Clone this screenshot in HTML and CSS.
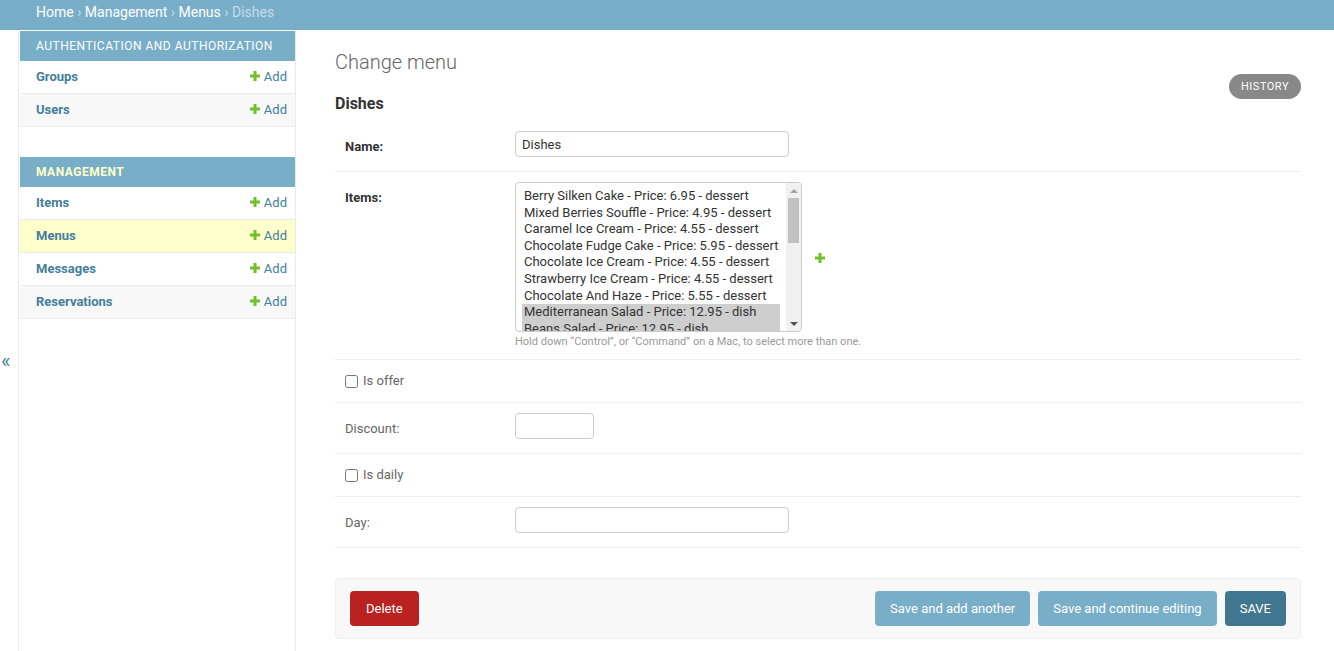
FILE: index.html
```html
<!DOCTYPE html>
<html lang="en">
<head>
<meta charset="utf-8">
<title>Change menu | Django site admin</title>
<link rel="stylesheet" href="styles.css">
</head>
<body>
<div class="breadcrumbs">
  <a href="#">Home</a> › <a href="#">Management</a> › <a href="#">Menus</a> › Dishes
</div>
<div class="main">
  <div class="toggle-nav" role="button">«</div>
  <nav class="sidebar">
    <div class="module">
      <div class="caption">Authentication and Authorization</div>
      <div class="nav-row"><a class="model" href="#">Groups</a><a class="addlink" href="#"><svg class="plus" viewBox="0 0 10 10"><path d="M3.5 0h3v3.5H10v3H6.5V10h-3V6.5H0v-3h3.5z"/></svg>Add</a></div>
      <div class="nav-row alt"><a class="model" href="#">Users</a><a class="addlink" href="#"><svg class="plus" viewBox="0 0 10 10"><path d="M3.5 0h3v3.5H10v3H6.5V10h-3V6.5H0v-3h3.5z"/></svg>Add</a></div>
    </div>
    <div class="module">
      <div class="caption current">Management</div>
      <div class="nav-row"><a class="model" href="#">Items</a><a class="addlink" href="#"><svg class="plus" viewBox="0 0 10 10"><path d="M3.5 0h3v3.5H10v3H6.5V10h-3V6.5H0v-3h3.5z"/></svg>Add</a></div>
      <div class="nav-row current-model"><a class="model" href="#">Menus</a><a class="addlink" href="#"><svg class="plus" viewBox="0 0 10 10"><path d="M3.5 0h3v3.5H10v3H6.5V10h-3V6.5H0v-3h3.5z"/></svg>Add</a></div>
      <div class="nav-row"><a class="model" href="#">Messages</a><a class="addlink" href="#"><svg class="plus" viewBox="0 0 10 10"><path d="M3.5 0h3v3.5H10v3H6.5V10h-3V6.5H0v-3h3.5z"/></svg>Add</a></div>
      <div class="nav-row alt"><a class="model" href="#">Reservations</a><a class="addlink" href="#"><svg class="plus" viewBox="0 0 10 10"><path d="M3.5 0h3v3.5H10v3H6.5V10h-3V6.5H0v-3h3.5z"/></svg>Add</a></div>
    </div>
  </nav>
  <div class="content">
    <div class="page-head">
      <div class="titles">
        <h1>Change menu</h1>
        <h2>Dishes</h2>
      </div>
      <a class="history" href="#">History</a>
    </div>
    <form class="change-form">
      <div class="form-row">
        <label class="field-label required" for="id_name">Name:</label>
        <div class="field"><input class="vTextField" id="id_name" type="text" value="Dishes"></div>
      </div>
      <div class="form-row items-row">
        <label class="field-label required">Items:</label>
        <div class="field">
          <div class="related-wrapper">
            <div class="listbox" role="listbox" aria-multiselectable="true">
              <div class="options">
                <div class="option">Berry Silken Cake - Price: 6.95 - dessert</div>
                <div class="option">Mixed Berries Souffle - Price: 4.95 - dessert</div>
                <div class="option">Caramel Ice Cream - Price: 4.55 - dessert</div>
                <div class="option">Chocolate Fudge Cake - Price: 5.95 - dessert</div>
                <div class="option">Chocolate Ice Cream - Price: 4.55 - dessert</div>
                <div class="option">Strawberry Ice Cream - Price: 4.55 - dessert</div>
                <div class="option">Chocolate And Haze - Price: 5.55 - dessert</div>
                <div class="option selected">Mediterranean Salad - Price: 12.95 - dish</div>
                <div class="option selected last">Beans Salad - Price: 12.95 - dish</div>
              </div>
              <div class="scrollbar">
                <div class="sb-btn"><span class="arrow-up"></span></div>
                <div class="sb-track"><div class="sb-thumb"></div></div>
                <div class="sb-btn"><span class="arrow-down"></span></div>
              </div>
            </div>
            <a class="related-add" href="#" title="Add another item"><svg class="plus" viewBox="0 0 10 10"><path d="M3.5 0h3v3.5H10v3H6.5V10h-3V6.5H0v-3h3.5z"/></svg></a>
          </div>
          <div class="help">Hold down “Control”, or “Command” on a Mac, to select more than one.</div>
        </div>
      </div>
      <div class="form-row checkbox-row">
        <input type="checkbox" id="id_is_offer"><label class="check-label" for="id_is_offer">Is offer</label>
      </div>
      <div class="form-row">
        <label class="field-label" for="id_discount">Discount:</label>
        <div class="field"><input class="vIntegerField" id="id_discount" type="text"></div>
      </div>
      <div class="form-row checkbox-row">
        <input type="checkbox" id="id_is_daily"><label class="check-label" for="id_is_daily">Is daily</label>
      </div>
      <div class="form-row">
        <label class="field-label" for="id_day">Day:</label>
        <div class="field"><input class="vTextField" id="id_day" type="text"></div>
      </div>
      <div class="submit-row">
        <a class="deletelink" href="#">Delete</a>
        <div class="save-buttons">
          <button type="button" class="btn">Save and add another</button>
          <button type="button" class="btn">Save and continue editing</button>
          <button type="button" class="btn default">SAVE</button>
        </div>
      </div>
    </form>
  </div>
</div>
</body>
</html>
```
FILE: styles.css
```css
* { box-sizing: border-box; }
html, body { margin: 0; padding: 0; }
body {
  font-family: Roboto, "Liberation Sans", sans-serif;
  font-size: 14px;
  color: #333;
  background: #fff;
  overflow: hidden;
}
a { text-decoration: none; }

.breadcrumbs {
  background: #79aec8;
  color: #c4dce8;
  font-size: 14px;
  height: 30px;
  line-height: 16px;
  padding: 4px 36px 0;
}
.breadcrumbs a { color: #fff; }

.main {
  display: flex;
  height: calc(100vh - 30px);
}

.toggle-nav {
  flex: 0 0 19px;
  width: 19px;
  border-right: 1px solid #eaeaea;
  background: #fff;
  color: #447e9b;
  font-size: 20px;
  line-height: 23px;
  padding: 320px 0 0 1px;
  cursor: pointer;
}

.sidebar {
  flex: 0 0 277px;
  width: 277px;
  min-width: 0;
  padding-left: 1px;
  border-top: 1px solid transparent;
  border-right: 1px solid #eaeaea;
  background: #fff;
}
.module { margin-bottom: 30px; }
.caption {
  background: #79aec8;
  color: #fff;
  font-size: 12px;
  line-height: 14px;
  padding: 8px 16px;
  text-transform: uppercase;
  letter-spacing: 0.5px;
  white-space: nowrap;
  overflow: hidden;
}
.caption.current { color: #ffc; font-weight: 700; }
.nav-row {
  display: flex;
  justify-content: space-between;
  align-items: center;
  height: 33px;
  padding: 0 8px 2px 16px;
  border-bottom: 1px solid #eaeaea;
  font-size: 13px;
  background: #fff;
}
.nav-row.alt { background: #f8f8f8; }
.nav-row.current-model { background: #ffc; }
.model { color: #447e9b; font-weight: 700; }
.addlink { color: #447e9b; display: flex; align-items: center; }
.plus { width: 10px; height: 10px; fill: #70bf2b; display: block; }
.addlink .plus { margin-right: 4px; }

.content {
  flex: 1;
  min-width: 0;
  padding: 21px 33px 0 39px;
}
.page-head {
  display: flex;
  justify-content: space-between;
  align-items: flex-start;
}
h1 {
  margin: 0 0 20px;
  font-size: 20px;
  line-height: 23px;
  font-weight: 300;
  color: #666;
}
h2 {
  margin: 0 0 8px;
  font-size: 16px;
  line-height: 19px;
  font-weight: 700;
  color: #333;
}
.history {
  margin-top: 23px;
  background: #888;
  color: #fff;
  font-size: 11px;
  line-height: 19px;
  padding: 3px 12px;
  border-radius: 15px;
  text-transform: uppercase;
  letter-spacing: 0.5px;
}

.form-row {
  display: flex;
  padding: 10px;
  border-bottom: 1px solid #eee;
  font-size: 13px;
  min-height: 51px;
}
.field-label {
  flex: 0 0 170px;
  padding: 8px 10px 0 0;
  line-height: 16px;
  color: #666;
  font-size: 13px;
}
.field-label.required { color: #333; font-weight: 700; }
.field { min-height: 30px; }

input[type=text] {
  font-family: Roboto, "Liberation Sans", sans-serif;
  font-size: 13px;
  color: #333;
  border: 1px solid #ccc;
  border-radius: 4px;
  padding: 5px 6px;
  height: 26px;
  margin: 0;
  display: block;
}
.vTextField { width: 274px; }
.vIntegerField { width: 79px; }

.related-wrapper { display: flex; align-items: center; }
.listbox {
  display: flex;
  width: 287px;
  height: 150px;
  border: 1px solid #ccc;
  border-radius: 4px;
  overflow: hidden;
  background: #fff;
  font-size: 13px;
  color: #333;
}
.options {
  flex: 1;
  overflow: hidden;
  padding: 5px 6px 0 6px;
}
.option {
  padding: 0 2px;
  line-height: 16.6px;
  height: 16.6px;
  white-space: nowrap;
}
.option.last { height: 15px; overflow: hidden; }
.option.selected { background: #cecece; }
.scrollbar {
  flex: 0 0 15px;
  display: flex;
  flex-direction: column;
  background: #f1f1f1;
}
.sb-btn {
  flex: 0 0 15px;
  display: flex;
  align-items: center;
  justify-content: center;
}
.arrow-up {
  width: 0; height: 0;
  border-left: 4px solid transparent;
  border-right: 4px solid transparent;
  border-bottom: 4px solid #a3a3a3;
}
.arrow-down {
  width: 0; height: 0;
  border-left: 4px solid transparent;
  border-right: 4px solid transparent;
  border-top: 4px solid #505050;
}
.sb-track { flex: 1; padding: 0 2px; }
.sb-thumb { height: 45px; background: #c1c1c1; }
.related-add { margin: 2px 0 0 13px; display: block; }
.help {
  font-size: 11px;
  line-height: 14px;
  color: #999;
  margin-top: 3px;
  padding-bottom: 0;
}

.checkbox-row { align-items: center; min-height: 43px; }
.checkbox-row input[type=checkbox] {
  width: 13px;
  height: 13px;
  margin: 0;
}
.check-label {
  color: #666;
  font-size: 13px;
  padding-left: 5px;
  line-height: 16px;
}

.submit-row {
  display: flex;
  justify-content: space-between;
  align-items: center;
  margin-top: 30px;
  padding: 12px 14px;
  background: #f8f8f8;
  border: 1px solid #eee;
  border-radius: 4px;
}
.deletelink {
  display: block;
  background: #ba2121;
  color: #fff;
  font-size: 13px;
  line-height: 15px;
  padding: 10px 16px;
  border-radius: 4px;
}
.save-buttons { display: flex; gap: 8px; }
.btn {
  font-family: Roboto, "Liberation Sans", sans-serif;
  font-size: 13px;
  line-height: 15px;
  height: 35px;
  padding: 10px 15px;
  border: none;
  border-radius: 4px;
  background: #79aec8;
  color: #fff;
  margin: 0;
}
.btn.default { background: #417690; }
```
